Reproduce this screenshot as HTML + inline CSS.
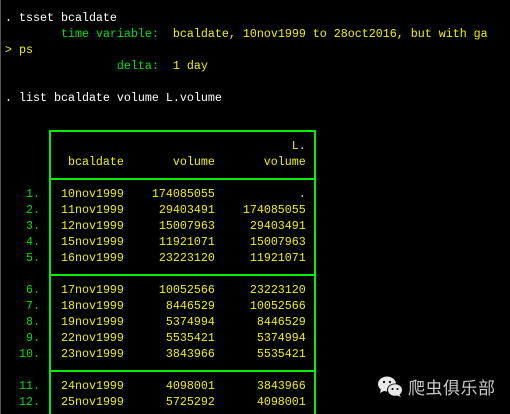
<!DOCTYPE html>
<html><head><meta charset="utf-8"><style>
html,body{margin:0;padding:0;background:#000;width:510px;height:414px;overflow:hidden;position:relative}
pre{position:absolute;left:5px;top:10px;margin:0;font-family:"Liberation Mono",monospace;font-size:11.67px;line-height:16px;color:#fff;white-space:pre}
.g{color:#00e000}.y{color:#f0f000}
.h{position:absolute;height:1.5px;background:#00ee00;left:49px;width:267px}
.v{position:absolute;width:1.5px;background:#00ee00;top:130px;height:284px}
.edge{position:absolute;left:0;top:0;width:1px;height:414px;background:#555}
.wx{position:absolute;left:408px;top:377px;font-family:"Noto Sans CJK SC",sans-serif;font-size:17px;line-height:20px;color:#c8c8c8;letter-spacing:0.5px}
</style></head><body>
<div class="edge"></div>
<pre>. tsset bcaldate
        <span class="g">time variable:</span>  <span class="y">bcaldate, 10nov1999 to 28oct2016, but with ga</span>
<span class="y">&gt; ps</span>
                <span class="g">delta:</span>  <span class="y">1 day</span>

. list bcaldate volume L.volume


<span class="y">                                         L.</span>
<span class="y">         bcaldate       volume       volume</span>

<span class="g">   1.</span><span class="y">   10nov1999    174085055            .</span>
<span class="g">   2.</span><span class="y">   11nov1999     29403491    174085055</span>
<span class="g">   3.</span><span class="y">   12nov1999     15007963     29403491</span>
<span class="g">   4.</span><span class="y">   15nov1999     11921071     15007963</span>
<span class="g">   5.</span><span class="y">   16nov1999     23223120     11921071</span>

<span class="g">   6.</span><span class="y">   17nov1999     10052566     23223120</span>
<span class="g">   7.</span><span class="y">   18nov1999      8446529     10052566</span>
<span class="g">   8.</span><span class="y">   19nov1999      5374994      8446529</span>
<span class="g">   9.</span><span class="y">   22nov1999      5535421      5374994</span>
<span class="g">  10.</span><span class="y">   23nov1999      3843966      5535421</span>

<span class="g">  11.</span><span class="y">   24nov1999      4098001      3843966</span>
<span class="g">  12.</span><span class="y">   25nov1999      5725292      4098001</span>
</pre>
<div class="h" style="top:130px"></div>
<div class="h" style="top:178px"></div>
<div class="h" style="top:274px"></div>
<div class="h" style="top:370px"></div>
<div class="v" style="left:49px"></div>
<div class="v" style="left:314px"></div>
<svg style="position:absolute;left:376px;top:374px" width="30" height="26" viewBox="0 0 30 26">
<ellipse cx="11" cy="10" rx="9" ry="7.5" fill="#e8e8e8"/>
<path d="M5 15 L4 19 L9 16.5Z" fill="#e8e8e8"/>
<ellipse cx="19" cy="16" rx="8" ry="6.5" fill="#000"/>
<ellipse cx="19" cy="16" rx="7" ry="5.8" fill="#e8e8e8"/>
<path d="M23 20 L25 23 L20 21Z" fill="#e8e8e8"/>
<circle cx="8" cy="8" r="1.1" fill="#000"/><circle cx="14" cy="8" r="1.1" fill="#000"/>
<circle cx="16.5" cy="15" r="1" fill="#000"/><circle cx="21.5" cy="15" r="1" fill="#000"/>
</svg>
<div class="wx">爬虫俱乐部</div>
</body></html>
